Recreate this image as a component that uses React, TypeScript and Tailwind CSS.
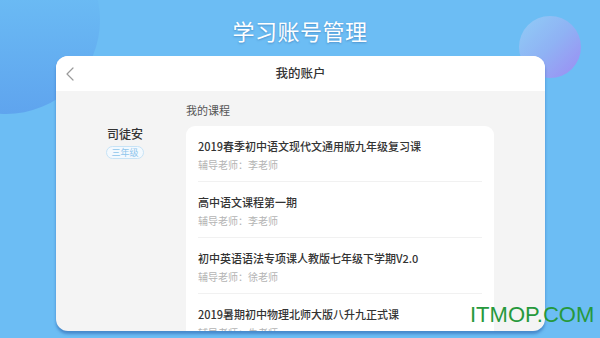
import { ChevronLeft } from "lucide-react";

const courses = [
  { title: "2019春季初中语文现代文通用版九年级复习课", teacher: "李老师" },
  { title: "高中语文课程第一期", teacher: "李老师" },
  { title: "初中英语语法专项课人教版七年级下学期V2.0", teacher: "徐老师" },
  { title: "2019暑期初中物理北师大版八升九正式课", teacher: "朱老师" },
];

const cjk = "font-['Noto_Sans_CJK_SC','Noto_Sans',sans-serif]";

export default function App() {
  return (
    <div className={`relative w-[600px] h-[338px] overflow-hidden bg-[#6cbdf4] ${cjk}`}>
      {/* decorative bubbles */}
      <div className="absolute -left-[88px] -top-[74px] h-[188px] w-[188px] rounded-full bg-gradient-to-b from-[#72c8f7] to-[#5fa4ee]" />
      <div className="absolute left-[519px] top-[16px] h-[62px] w-[62px] rounded-full bg-gradient-to-br from-[#90cdf6] via-[#8fb2f4] to-[#9b8af3]" />

      <div className="relative flex flex-col items-center">
        <h1 className="mt-[15px] h-[30px] text-[22px] leading-[30px] tracking-[0.5px] text-white [text-shadow:0_1px_2px_rgba(40,90,150,0.45)]">
          学习账号管理
        </h1>

        <div className="mt-[11px] ml-[1px] h-[275px] w-[489px] overflow-hidden rounded-[12px] bg-[#f4f4f4] shadow-[0_3px_3px_rgba(40,95,170,0.55)]">
          <div className="relative flex h-[35px] items-center justify-center bg-white">
            <ChevronLeft className="absolute left-[2px] h-[24px] w-[24px] text-[#9a9a9a]" strokeWidth={1.2} />
            <span className="text-[12.5px] font-medium text-[#333]">我的账户</span>
          </div>

          <div className="flex">
            <div className="flex w-[130px] flex-col items-center pt-[34px] pl-[8px]">
              <span className="text-[12px] leading-[18px] font-medium text-[#333]">司徒安</span>
              <span className="mt-[3px] rounded-full border border-[#c7e3f6] bg-[#f3f9fe] px-[4px] text-[9px] leading-[11px] text-[#8ec5ec]">
                三年级
              </span>
            </div>

            <div className="flex w-[308px] flex-col">
              <div className="pt-[11px] pb-[8px] text-[11px] leading-[16px] text-[#555]">我的课程</div>
              <div className="rounded-[9px] bg-white">
                {courses.map((c, i) => (
                  <div key={i} className="mx-3 border-b border-[#f1f1f1] pt-[12px] pb-[9px]">
                    <div className="text-[11px] leading-[16px] font-medium text-[#333]">{c.title}</div>
                    <div className="mt-[4px] text-[10px] leading-[14px] text-[#b4b4b4]">
                      辅导老师：{c.teacher}
                    </div>
                  </div>
                ))}
              </div>
            </div>
          </div>
        </div>
      </div>

      <span className="absolute left-[470px] top-[302px] font-['Liberation_Sans',Arial,sans-serif] text-[22px] leading-[26px] text-[#26993c]">
        ITMOP.COM
      </span>
    </div>
  );
}
